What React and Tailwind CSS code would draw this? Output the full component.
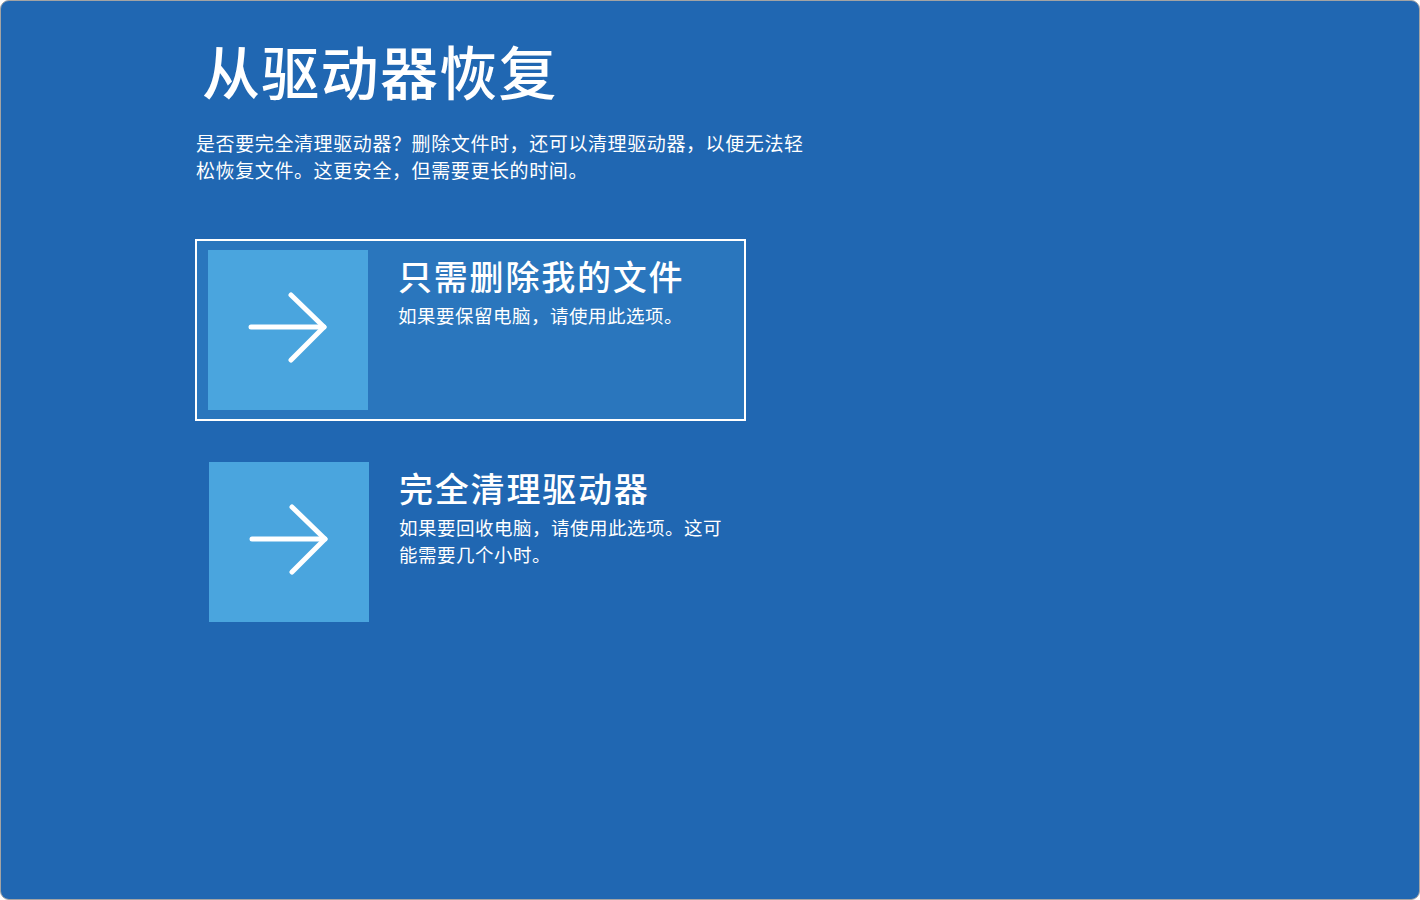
function Arrow() {
  return (
    <svg width="80" height="72" viewBox="0 0 80 72" fill="none" stroke="white" strokeWidth="5" strokeLinecap="round" strokeLinejoin="round">
      <path d="M3 35h73" />
      <path d="M43 3l33 32-33 33" />
    </svg>
  );
}

function Option({ title, desc, selected }) {
  return (
    <div
      className={`flex w-[551px] h-[182px] px-[11px] py-[9px] border-2 ${
        selected ? 'border-white bg-[#2a76bd]' : 'border-transparent'
      }`}
    >
      <div className="w-[160px] h-[160px] shrink-0 bg-[#4aa5de] flex items-center justify-center pb-[4px]">
        <Arrow />
      </div>
      <div className="pl-[30px] pt-[5px] flex-1 min-w-0">
        <p className="text-[34px] leading-[42px] tracking-[1.8px] font-medium text-white">{title}</p>
        <p className="mt-[5px] text-[18.5px] leading-[27px] tracking-[0.5px] text-white">{desc}</p>
      </div>
    </div>
  );
}

export default function App() {
  return (
    <div
      className="w-[1420px] h-[900px] bg-white"
      style={{ fontFamily: '"Noto Sans CJK SC", "Noto Sans", sans-serif' }}
    >
      <div className="w-full h-full rounded-[9px] border border-[#a3a3a3] bg-[#2067b2] pl-[194px] pt-[36px]">
        <h1 className="text-[58px] leading-[66px] tracking-[1.3px] font-medium text-white pl-[7px]">从驱动器恢复</h1>
        <p className="mt-[26px] w-[620px] text-[19px] leading-[27px] tracking-[0.6px] text-white pl-[1px]">
          是否要完全清理驱动器？删除文件时，还可以清理驱动器，以便无法轻松恢复文件。这更安全，但需要更长的时间。
        </p>
        <div className="mt-[56px] flex flex-col gap-[30px]">
          <Option selected title="只需删除我的文件" desc="如果要保留电脑，请使用此选项。" />
          <div className="pl-[1px]">
            <Option title="完全清理驱动器" desc="如果要回收电脑，请使用此选项。这可能需要几个小时。" />
          </div>
        </div>
      </div>
    </div>
  );
}
